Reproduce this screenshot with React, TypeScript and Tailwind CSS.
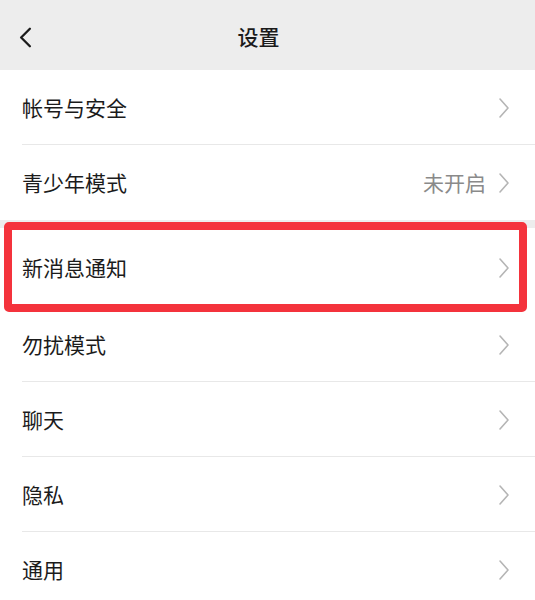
import { ChevronLeft } from "lucide-react";

type Row = {
  label: string;
  value?: string;
};

const topRows: Row[] = [{ label: "帐号与安全" }, { label: "青少年模式", value: "未开启" }];
const bottomRows: Row[] = [{ label: "勿扰模式" }, { label: "聊天" }, { label: "隐私" }, { label: "通用" }];

function Arrow() {
  return (
    <svg width="12" height="22" viewBox="0 0 12 22" fill="none" className="shrink-0">
      <path d="M2 2 L10 11 L2 20" stroke="#b5b5b5" strokeWidth="1.6" strokeLinecap="round" strokeLinejoin="round" />
    </svg>
  );
}

function SettingRow({ row, divider, tall }: { row: Row; divider: boolean; tall?: boolean }) {
  return (
    <div className={`relative flex items-center pl-[22px] pr-[25px] ${tall ? "h-[79px]" : "h-[75px]"}`}>
      <span className="flex-1 text-[21px] text-[#1b1b1b]">{row.label}</span>
      {row.value ? <span className="mr-[12px] text-[21px] text-[#8a8a8a]">{row.value}</span> : null}
      <Arrow />
      {divider ? <div className="absolute bottom-0 left-[22px] right-0 h-px bg-[#e8e8e8]" /> : null}
    </div>
  );
}

export default function App() {
  return (
    <div className="h-[600px] w-[535px] overflow-hidden bg-[#ededed] font-['Noto_Sans_CJK_SC',sans-serif]">
      <header className="relative flex h-[70px] items-center justify-center pr-[18px] pt-[3px]">
        <ChevronLeft className="absolute left-[8px] top-[20px] h-[35px] w-[35px] text-[#1b1b1b]" strokeWidth={1.6} />
        <h1 className="text-[21px] font-medium text-[#1b1b1b]">设置</h1>
      </header>

      <section className="bg-white">
        {topRows.map((row, i) => (
          <SettingRow key={row.label} row={row} divider={i < topRows.length - 1} />
        ))}
      </section>

      <section className="mt-[8px] bg-white">
        <div className="relative">
          <SettingRow row={{ label: "新消息通知" }} divider={false} tall />
          <div className="absolute left-[4px] right-[8px] top-[-6px] bottom-[-5px] rounded-[5px] border-[8px] border-[#f4333c]" />
        </div>
        {bottomRows.map((row, i) => (
          <SettingRow key={row.label} row={row} divider={i < bottomRows.length - 1} />
        ))}
      </section>
    </div>
  );
}
